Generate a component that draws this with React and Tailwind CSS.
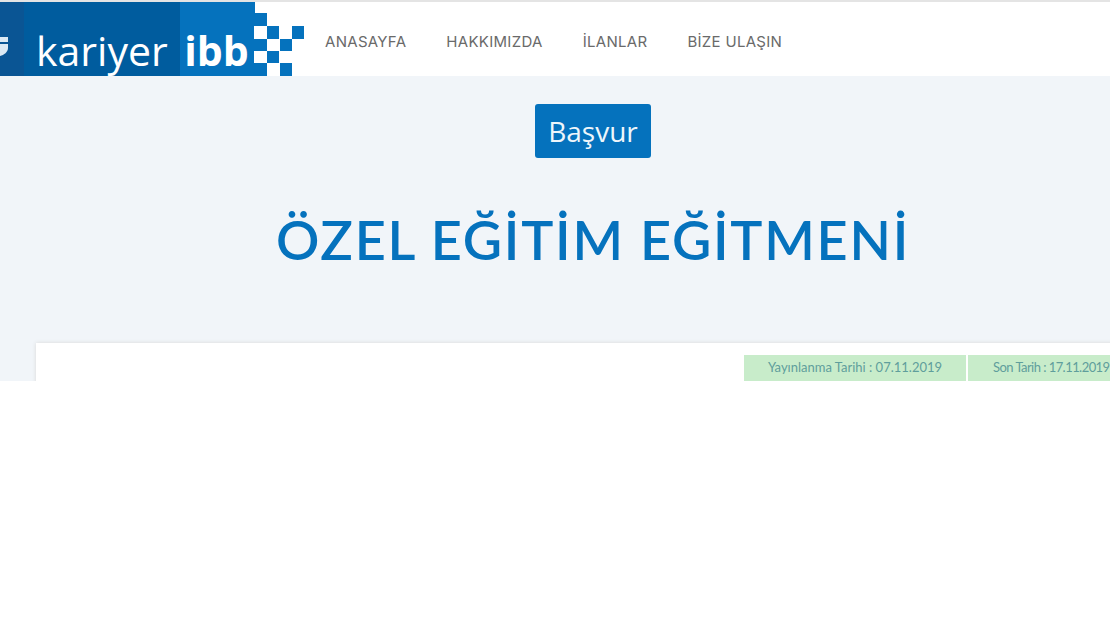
const navItems = ["ANASAYFA", "HAKKIMIZDA", "İLANLAR", "BİZE ULAŞIN"];

const Checker = () => (
  <svg width="51" height="74" viewBox="0 0 51 74" className="shrink-0">
    <path d="M0 0H1V11H13V74H0Z" fill="#0572bd" />
    <rect x="0" y="24" width="13" height="13" fill="#fff" />
    <rect x="13" y="24" width="12" height="13" fill="#0572bd" />
    <rect x="38" y="24" width="12" height="13" fill="#0572bd" />
    <rect x="13" y="37" width="12" height="12" fill="#fff" />
    <rect x="26" y="37" width="12" height="12" fill="#0572bd" />
    <rect x="0" y="49" width="13" height="12" fill="#fff" />
    <rect x="13" y="49" width="12" height="12" fill="#0572bd" />
    <rect x="26" y="61" width="12" height="13" fill="#0572bd" />
  </svg>
);

const Logo = () => (
  <div className="flex h-[74px] w-[305px] shrink-0 font-['Open_Sans',sans-serif] text-white">
    <div className="relative flex w-[181px] items-end bg-[#005c9e] pb-[2px] pl-[36px]">
      <div className="absolute left-0 top-0 h-full w-[24px] bg-[#0a5594]" />
      <svg width="8" height="20" viewBox="0 0 8 20" className="absolute left-0 top-[34px]">
        <path d="M0 1H8V12C8 16 4 19 0 20Z" fill="#dbe9f4" />
        <rect x="0" y="6" width="8" height="2" fill="#0a5594" />
      </svg>
      <span className="relative text-[41px] leading-[48px]">kariyer</span>
    </div>
    <div className="flex w-[74px] items-end bg-[#0572bd] pb-[2px] pl-[4px]">
      <span className="text-[41px] font-bold leading-[48px]">ibb</span>
    </div>
    <Checker />
  </div>
);

const App = () => {
  return (
    <div className="h-[625px] w-[1110px] overflow-hidden bg-white font-['Lato',sans-serif]">
      <header className="flex h-[76px] items-end border-t-2 border-[#e4e4e4] bg-white">
        <Logo />
        <nav className="ml-[20px] flex h-[74px] items-center gap-[40px] pt-[6px] font-['Inter',sans-serif] text-[15px] tracking-[0.3px] text-[#6a6a6a]">
          {navItems.map((item) => (
            <a key={item}>{item}</a>
          ))}
        </nav>
      </header>

      <main className="flex h-[305px] w-[1186px] flex-col items-center overflow-hidden bg-[#f1f5f9] pt-[28px]">
        <button className="h-[54px] w-[116px] shrink-0 rounded-[3px] bg-[#0572bd] font-['Open_Sans',sans-serif] text-[28px] text-[#eef6fb]">
          Başvur
        </button>
        <h1 className="mt-[43px] shrink-0 text-[54px] font-semibold leading-[78px] tracking-[1.75px] text-[#0572bd]">
          ÖZEL EĞİTİM EĞİTMENİ
        </h1>
        <section className="ml-[36px] mt-[64px] flex h-[60px] w-[1114px] shrink-0 justify-end self-start bg-white pr-[12px] pt-[12px] shadow-[0_0_4px_#d8d8d8]">
          <div className="flex h-[26px] gap-[2px] text-[13px] text-[#5f9e9c]">
            <span className="flex w-[222px] items-center justify-center bg-[#c8ecca]">Yayınlanma Tarihi : 07.11.2019</span>
            <span className="flex w-[170px] items-center whitespace-nowrap bg-[#c8ecca] pl-[25px] tracking-[-0.55px]">Son Tarih : 17.11.2019</span>
          </div>
        </section>
      </main>
    </div>
  );
};

export default App;
